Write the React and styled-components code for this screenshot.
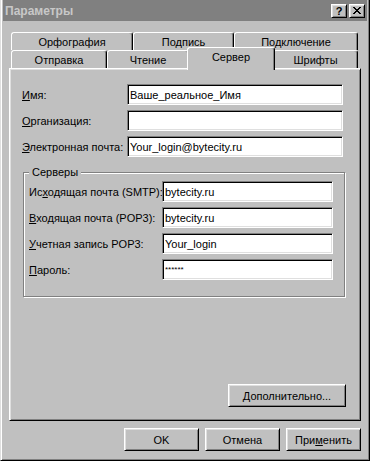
import React from 'react';
import styled, { createGlobalStyle, css } from 'styled-components';

const GlobalStyle = createGlobalStyle`
  html, body { margin: 0; padding: 0; background: #fff; }
  body {
    font-family: "Liberation Sans", Arial, sans-serif;
    font-size: 11px;
    color: #000;
  }
  * { box-sizing: border-box; }
`;

const raised = css`
  border: 1px solid;
  border-color: #fff #000 #000 #fff;
  box-shadow: inset 1px 1px #dfdfdf, inset -1px -1px #808080;
`;

const sunken = css`
  border: 1px solid;
  border-color: #808080 #fff #fff #808080;
  box-shadow: inset 1px 1px #000, inset -1px -1px #dfdfdf;
`;

const Window = styled.div`
  width: 370px;
  height: 461px;
  background: #c0c0c0;
  border-left: 1px solid #dfdfdf;
  border-right: 1px solid #000;
  border-bottom: 1px solid #000;
  box-shadow: inset 1px 0 #fff, inset -1px -1px #808080;
  padding: 0 2px 2px 2px;
  display: flex;
  flex-direction: column;
`;

const TitleBar = styled.div`
  height: 21px;
  background: #808080;
  color: #c8c8c8;
  display: flex;
  align-items: center;
  padding: 0 2px 0 2px;
  font-weight: bold;
  font-size: 12px;
`;

const TitleText = styled.div`
  flex: 1;
`;

const TitleButton = styled.div`
  width: 16px;
  height: 14px;
  ${raised};
  background: #c0c0c0;
  color: #000;
  display: flex;
  align-items: center;
  justify-content: center;
  font-size: 11px;
  font-weight: bold;
  margin-left: ${p => (p.$gap ? 2 : 0)}px;
`;

const Body = styled.div`
  padding: 11px 6px 0 6px;
  display: flex;
  flex-direction: column;
`;

const TabRow = styled.div`
  display: flex;
  align-items: flex-end;
  height: 18px;
  padding: 0 2px;
`;

const Tab = styled.div`
  width: ${p => p.$w}px;
  height: 18px;
  flex-shrink: 0;
  background: #c0c0c0;
  border: 1px solid;
  border-bottom: none;
  border-color: #fff #000 transparent #fff;
  border-radius: 3px 3px 0 0;
  box-shadow: inset -1px 0 #808080;
  display: flex;
  align-items: center;
  justify-content: center;
  padding-top: 1px;
  white-space: nowrap;

  ${p => p.$active && css`
    width: ${p.$w + 4}px;
    height: 23px;
    margin: 0 -2px -2px;
    position: relative;
    z-index: 2;
    padding: 0 0 5px 0;
  `}
`;

const Panel = styled.div`
  height: 353px;
  background: #c0c0c0;
  ${raised};
  padding: 15px 14px 13px 12px;
  display: flex;
  flex-direction: column;
`;

const Stack = styled.div`
  display: flex;
  flex-direction: column;
  gap: 5px;
`;

const FieldRow = styled.div`
  display: flex;
  align-items: center;
  height: 21px;
`;

const Label = styled.label`
  width: ${p => p.$w}px;
  flex-shrink: 0;
  white-space: nowrap;
`;

const TextBox = styled.input`
  width: ${p => p.$w}px;
  height: 21px;
  ${sunken};
  background: #fff;
  font-family: "Liberation Sans", Arial, sans-serif;
  font-size: ${p => (p.$small ? 8 : 11)}px;
  color: #000;
  padding: 0 2px;
  margin: 0;
  outline: none;
`;

const Group = styled.fieldset`
  margin: 9px 1px 0 1px;
  padding: 3px 9px 16px 5px;
  border: 1px solid #808080;
  box-shadow: inset 1px 1px #fff, 1px 1px #fff;
  min-width: 0;
`;

const Legend = styled.legend`
  padding: 0 3px;
  margin: 0;
  background: #c0c0c0;
`;

const Button = styled.button`
  width: ${p => p.$w || 75}px;
  height: 23px;
  ${raised};
  background: #c0c0c0;
  font-family: "Liberation Sans", Arial, sans-serif;
  font-size: 11px;
  color: #000;
  padding: 0;
  margin: 0;
`;

const MoreButton = styled(Button)`
  margin-top: auto;
  align-self: flex-end;
`;

const Footer = styled.div`
  display: flex;
  justify-content: flex-end;
  gap: 6px;
  padding-top: 7px;
`;

const CloseGlyph = () => (
  <svg width="8" height="7" viewBox="0 0 8 7" shapeRendering="crispEdges">
    <path
      fill="#000"
      d="M0 0h2v1H0zM6 0h2v1H6zM1 1h2v1H1zM5 1h2v1H5zM2 2h4v1H2zM3 3h2v1H3zM2 4h4v1H2zM1 5h2v1H1zM5 5h2v1H5zM0 6h2v1H0zM6 6h2v1H6z"
    />
  </svg>
);

const backTabs = [
  { label: 'Орфография', w: 122 },
  { label: 'Подпись', w: 101 },
  { label: 'Подключение', w: 124 },
];

const frontTabs = [
  { label: 'Отправка', w: 96 },
  { label: 'Чтение', w: 82 },
  { label: 'Сервер', w: 84, active: true },
  { label: 'Шрифты', w: 85 },
];

const mainFields = [
  { key: 'И', rest: 'мя:', value: 'Ваше_реальное_Имя' },
  { key: 'О', rest: 'рганизация:', value: '' },
  { key: 'Э', rest: 'лектронная почта:', value: 'Your_login@bytecity.ru' },
];

const serverFields = [
  { pre: 'Ис', key: 'х', rest: 'одящая почта (SMTP):', value: 'bytecity.ru' },
  { pre: '', key: 'В', rest: 'ходящая почта (POP3):', value: 'bytecity.ru' },
  { pre: '', key: 'У', rest: 'четная запись POP3:', value: 'Your_login' },
  { pre: '', key: 'П', rest: 'ароль:', value: '******', small: true },
];

export default function App() {
  return (
    <>
      <GlobalStyle />
      <Window>
        <TitleBar>
          <TitleText>Параметры</TitleText>
          <TitleButton>?</TitleButton>
          <TitleButton $gap><CloseGlyph /></TitleButton>
        </TitleBar>
        <Body>
          <TabRow>
            {backTabs.map(t => <Tab key={t.label} $w={t.w}>{t.label}</Tab>)}
          </TabRow>
          <TabRow>
            {frontTabs.map(t => (
              <Tab key={t.label} $w={t.w} $active={t.active}>{t.label}</Tab>
            ))}
          </TabRow>
          <Panel>
            <Stack>
              {mainFields.map(f => (
                <FieldRow key={f.rest}>
                  <Label $w={105}><u>{f.key}</u>{f.rest}</Label>
                  <TextBox $w={216} readOnly value={f.value} />
                </FieldRow>
              ))}
            </Stack>
            <Group>
              <Legend>Серверы</Legend>
              <Stack>
                {serverFields.map(f => (
                  <FieldRow key={f.rest}>
                    <Label $w={133}>{f.pre}<u>{f.key}</u>{f.rest}</Label>
                    <TextBox $w={171} $small={f.small} readOnly value={f.value} />
                  </FieldRow>
                ))}
              </Stack>
            </Group>
            <MoreButton $w={118}><u>Д</u>ополнительно...</MoreButton>
          </Panel>
          <Footer>
            <Button>OK</Button>
            <Button>Отмена</Button>
            <Button>При<u>м</u>енить</Button>
          </Footer>
        </Body>
      </Window>
    </>
  );
}
